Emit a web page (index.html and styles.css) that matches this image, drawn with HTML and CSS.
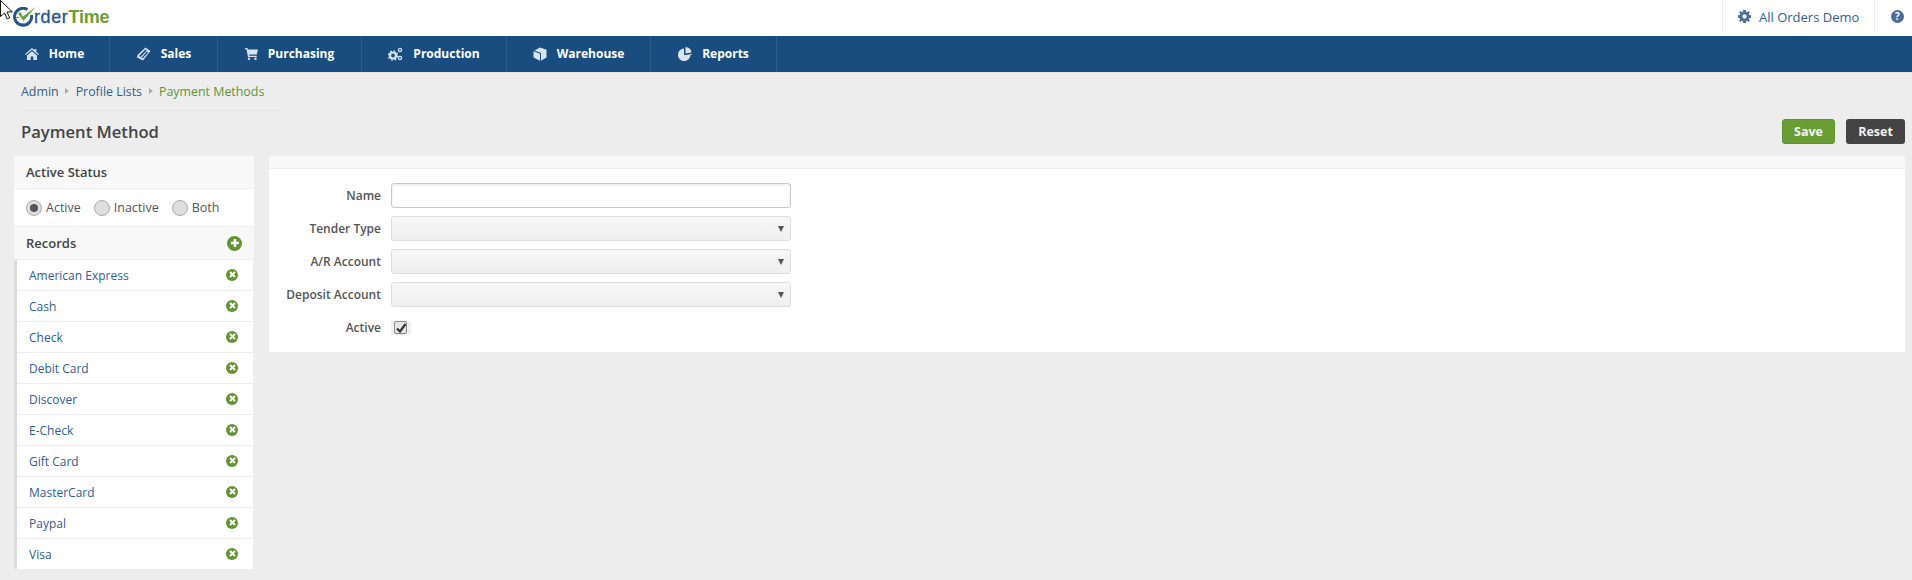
FILE: index.html
```html
<!DOCTYPE html>
<html lang="en">
<head>
<meta charset="utf-8">
<title>Payment Method</title>
<link rel="stylesheet" href="styles.css">
</head>
<body>
<svg class="cursor" width="13" height="20" viewBox="0 0 13 20"><path d="M.5.5v16l4-3.600 2.600 6 2.600-1.100-2.600-5.900h5.200z" fill="#fff" stroke="#111"/></svg>
<header class="topbar">
  <a class="logo">
    <svg class="logo-o" width="24" height="21" viewBox="0 0 24 21"><path d="M14.500 2.500A8.500 8.500 0 1 0 18.400 8" fill="none" stroke="#27558a" stroke-width="3"/><path d="M9.500 16v2M3.500 10.500h2" stroke="#27558a" stroke-width="1.200"/><path d="M5 6.500l2-1.500 3 4.500L22.500 0 10.500 14z" fill="#6a9f38"/></svg><span class="logo-a">rder</span><span class="logo-b">Time</span>
  </a>
  <div class="top-right">
    <div class="top-item company">
      <svg width="13" height="13" viewBox="0 0 12 12"><path fill="#4a6d9c" fill-rule="evenodd" d="M4.800 0h2.400l.3 1.600 1 .4L9.900 1l1.100 1.100-1 1.400.4 1 1.600.3v2.400l-1.600.3-.4 1 1 1.400-1.100 1.100-1.400-1-1 .4-.3 1.600H4.800l-.3-1.600-1-.4-1.400 1L1 9.900l1-1.400-.4-1L0 7.200V4.800l1.600-.3.4-1-1-1.400L2.100 1l1.400 1 1-.4zM6 4a2 2 0 1 0 0 4 2 2 0 0 0 0-4z"/></svg>
      <span>All Orders Demo</span>
    </div>
    <div class="top-item help"><span class="help-icon">?</span></div>
  </div>
</header>
<nav class="mainnav">
  <a class="nav-item w-home"><svg width="14" height="12" viewBox="0 0 14 12"><path fill="#d9e3ec" d="M7 0l2.500 2.200V1h1.800v2.800L14 6.300l-.8.8L7 1.700.8 7.100 0 6.300zM2 7.500L7 3.200l5 4.300V12H8.300V8.500H5.700V12H2z"/></svg><span>Home</span></a>
  <a class="nav-item w-sales"><svg width="15" height="14" viewBox="0 0 15 14"><path fill="#d9e3ec" d="M9.500.5l5 3.500-2.500 3L7 13.500 1 10.500l.5-2.500zM9.300 2.500L3 9l1.500 1L10.800 3.500zM11 4.500L5.500 10.800l1 .6 5.700-6z"/></svg><span>Sales</span></a>
  <a class="nav-item w-purch"><svg width="13" height="12" viewBox="0 0 13 12"><path fill="#d9e3ec" d="M0 0h2.500l.4 1.500H13l-1.300 5H4l.3 1.200h7.500V9H3L1.500 1.300H0z"/><circle cx="4" cy="10.700" r="1.200" fill="#d9e3ec"/><circle cx="10.500" cy="10.700" r="1.200" fill="#d9e3ec"/></svg><span>Purchasing</span></a>
  <a class="nav-item w-prod"><svg width="15" height="14" viewBox="0 0 15 14"><circle cx="5" cy="8.500" r="3" fill="none" stroke="#d9e3ec" stroke-width="2.200"/><circle cx="5" cy="8.500" r="4.600" fill="none" stroke="#d9e3ec" stroke-width="1.400" stroke-dasharray="1.800 1.800"/><circle cx="12" cy="3" r="1.600" fill="none" stroke="#d9e3ec" stroke-width="1.300"/><circle cx="12" cy="11" r="1.600" fill="none" stroke="#d9e3ec" stroke-width="1.300"/></svg><span>Production</span></a>
  <a class="nav-item w-ware"><svg width="14" height="14" viewBox="0 0 14 14"><path fill="#d9e3ec" d="M7 .5l6.500 2.300v7.700L8 13.800V6L1.500 3.500zM.5 4.300L7 6.700v7.100L.5 10.500z"/></svg><span>Warehouse</span></a>
  <a class="nav-item w-rep"><svg width="14" height="14" viewBox="0 0 14 14"><path fill="#d9e3ec" d="M6 1.500V8h6.500A6.300 6.300 0 1 1 6 1.500z"/><path fill="#d9e3ec" d="M7.500 0a6 6 0 0 1 6 5.500L7.500 6.500z"/><path fill="#d9e3ec" d="M8.500 7h5.300a6.300 6.300 0 0 1-.3 1z"/></svg><span>Reports</span></a>
</nav>
<main class="content">
  <div class="crumbs">
    <a>Admin</a><i class="caret"></i><a>Profile Lists</a><i class="caret"></i><span class="current">Payment Methods</span>
  </div>
  <div class="titlebar">
    <h1>Payment Method</h1>
    <div class="actions"><button class="btn save">Save</button><button class="btn reset">Reset</button></div>
  </div>
  <div class="columns">
    <aside class="sidebar">
      <div class="side-head">Active Status</div>
      <div class="radios">
        <label class="radio"><span class="radio-dot on"></span>Active</label>
        <label class="radio"><span class="radio-dot"></span>Inactive</label>
        <label class="radio"><span class="radio-dot"></span>Both</label>
      </div>
      <div class="side-head records">Records<span class="add"><svg width="10" height="10" viewBox="0 0 10 10"><path d="M5 1v8M1 5h8" stroke="#fff" stroke-width="2.600"/></svg></span></div>
      <ul class="list">
        <li><a>American Express</a><span class="del"><svg width="7" height="7" viewBox="0 0 7 7"><path d="M1 1l5 5M6 1L1 6" stroke="#fff" stroke-width="2"/></svg></span></li>
        <li><a>Cash</a><span class="del"><svg width="7" height="7" viewBox="0 0 7 7"><path d="M1 1l5 5M6 1L1 6" stroke="#fff" stroke-width="2"/></svg></span></li>
        <li><a>Check</a><span class="del"><svg width="7" height="7" viewBox="0 0 7 7"><path d="M1 1l5 5M6 1L1 6" stroke="#fff" stroke-width="2"/></svg></span></li>
        <li><a>Debit Card</a><span class="del"><svg width="7" height="7" viewBox="0 0 7 7"><path d="M1 1l5 5M6 1L1 6" stroke="#fff" stroke-width="2"/></svg></span></li>
        <li><a>Discover</a><span class="del"><svg width="7" height="7" viewBox="0 0 7 7"><path d="M1 1l5 5M6 1L1 6" stroke="#fff" stroke-width="2"/></svg></span></li>
        <li><a>E-Check</a><span class="del"><svg width="7" height="7" viewBox="0 0 7 7"><path d="M1 1l5 5M6 1L1 6" stroke="#fff" stroke-width="2"/></svg></span></li>
        <li><a>Gift Card</a><span class="del"><svg width="7" height="7" viewBox="0 0 7 7"><path d="M1 1l5 5M6 1L1 6" stroke="#fff" stroke-width="2"/></svg></span></li>
        <li><a>MasterCard</a><span class="del"><svg width="7" height="7" viewBox="0 0 7 7"><path d="M1 1l5 5M6 1L1 6" stroke="#fff" stroke-width="2"/></svg></span></li>
        <li><a>Paypal</a><span class="del"><svg width="7" height="7" viewBox="0 0 7 7"><path d="M1 1l5 5M6 1L1 6" stroke="#fff" stroke-width="2"/></svg></span></li>
        <li><a>Visa</a><span class="del"><svg width="7" height="7" viewBox="0 0 7 7"><path d="M1 1l5 5M6 1L1 6" stroke="#fff" stroke-width="2"/></svg></span></li>
      </ul>
    </aside>
    <section class="panel">
      <div class="panel-head"></div>
      <form class="form">
        <div class="row"><label>Name</label><div class="field input"></div></div>
        <div class="row"><label>Tender Type</label><div class="field select"><i></i></div></div>
        <div class="row"><label>A/R Account</label><div class="field select"><i></i></div></div>
        <div class="row"><label>Deposit Account</label><div class="field select"><i></i></div></div>
        <div class="row"><label>Active</label><div class="check-wrap"><span class="check"><svg width="10" height="10" viewBox="0 0 10 10"><path d="M1 5.500l3 3L9.500 1" fill="none" stroke="#333" stroke-width="2.200"/></svg></span></div></div>
      </form>
    </section>
  </div>
</main>
</body>
</html>
```
FILE: styles.css
```css
* { box-sizing: border-box; }
html, body { margin: 0; height: 100%; }
body {
  background: #ededed;
  font-family: "Open Sans", sans-serif;
  font-size: 12px;
  color: #444;
  overflow: hidden;
}
a { color: #2f5d94; }
.cursor { position: absolute; left: 0; top: 0; z-index: 5; }

.topbar { height: 36px; background: #fff; display: flex; justify-content: space-between; }
.logo { display: flex; align-items: center; padding: 0 0 2px 13px; font-family: "Liberation Sans", sans-serif; font-weight: 700; font-size: 18px; line-height: 34px; }
.logo-o { margin-right: -3px; flex: none; }
.logo-a { color: #27558a; font-weight: 400; letter-spacing: 0.600px; -webkit-text-stroke: 0.300px #27558a; }
.logo-b { color: #6a9f38; letter-spacing: -0.200px; }
.top-right { display: flex; height: 33px; }
.top-item { display: flex; align-items: center; border-left: 1px solid #e8e8e8; }
.company { width: 152px; padding-left: 15px; gap: 8px; color: #2f5d94; font-size: 13px; }
.help { width: 38px; padding-left: 16px; }
.help-icon { width: 13px; height: 13px; border-radius: 50%; background: #4a6d9c; color: #fff; font-size: 10px; font-weight: 700; line-height: 13px; text-align: center; }

.mainnav { height: 36px; background: #194d7f; display: flex; box-shadow: 0 1px 0 #e6e6e6; }
.nav-item { display: flex; align-items: center; justify-content: center; gap: 10px; border-right: 1px solid #2d5d8b; color: #fff; font-weight: 700; font-size: 12px; padding-bottom: 1px; }
.nav-item span { margin-bottom: 1px; }
.w-home { width: 110px; }
.w-sales { width: 108px; }
.w-purch { width: 144px; }
.w-prod { width: 145px; }
.w-ware { width: 144px; }
.w-rep { width: 126px; }

.content { padding: 0 7px 0 14px; }
.crumbs { width: 259px; margin-left: 7px; height: 39px; border-bottom: 1px solid #e4e4e4; display: flex; align-items: center; font-size: 12.400px; }
.crumbs a { color: #2f5d94; }
.caret { width: 0; height: 0; margin: 0 6.500px; border-left: 4px solid #aaa; border-top: 3.500px solid transparent; border-bottom: 3.500px solid transparent; }
.current { color: #5c9632; }
.titlebar { height: 45px; display: flex; justify-content: space-between; align-items: flex-start; }
.titlebar h1 { margin: 10px 0 0 7px; font-size: 16.600px; line-height: 22px; font-weight: 600; color: #444; }
.actions { display: flex; gap: 11px; margin-top: 8px; }
.btn { height: 25px; border: 0; border-radius: 3px; color: #f2f2f2; font: 700 12.500px/25px "Open Sans", sans-serif; padding: 0; }
.save { width: 53px; background: #6a9d33; border: 1px solid #5f9330; line-height: 23px; }
.reset { width: 59px; background: #444; }

.columns { display: flex; gap: 15px; align-items: flex-start; }
.sidebar { width: 240px; flex: none; }
.side-head { height: 33px; background: #f8f8f8; border-bottom: 1px solid #eee; padding: 0 12px; display: flex; align-items: center; justify-content: space-between; font-weight: 600; font-size: 13px; color: #444; }
.records { height: 33px; }
.add { width: 15px; height: 15px; border-radius: 50%; background: #5f9630; display: flex; align-items: center; justify-content: center; }
.radios { height: 38px; background: #fff; border-bottom: 1px solid #eee; padding: 0 12px; display: flex; align-items: center; gap: 13px; font-size: 12.500px; }
.radio { display: flex; align-items: center; gap: 4px; color: #555; }
.radio-dot { width: 16px; height: 16px; border-radius: 50%; background: #dedede; border: 1px solid #aaa; display: flex; align-items: center; justify-content: center; }
.radio-dot.on::after { content: ""; width: 8px; height: 8px; border-radius: 50%; background: #555; }
.list { list-style: none; margin: 0; padding: 0; width: 239px; border-left: 3px solid #ddd; }
.list li { height: 31px; background: #fff; border-bottom: 1px solid #eee; display: flex; align-items: center; justify-content: space-between; padding: 0 15px 1px 12px; }
.list li a { margin-top: 1px; }
.list li:last-child { border-bottom: 0; height: 30px; }
.del { width: 12px; height: 12px; border-radius: 50%; background: #5f9630; display: flex; align-items: center; justify-content: center; }

.panel { flex: 1; background: #fff; height: 196px; }
.panel-head { height: 13px; background: #f8f8f8; border-bottom: 1px solid #eee; }
.form { padding-top: 14px; display: flex; flex-direction: column; gap: 8px; }
.row { display: flex; align-items: center; height: 25px; }
.row label { width: 112px; text-align: right; margin-right: 10px; color: #555; font-weight: 600; font-size: 12px; padding-bottom: 1px; }
.field { width: 400px; height: 25px; border-radius: 3px; }
.input { background: #fff; border: 1px solid #c8c8c8; box-shadow: inset 0 1px 3px #e6e6e6; }
.select { background: linear-gradient(#f7f7f7, #efefef); border: 1px solid #dcdcdc; display: flex; align-items: center; justify-content: flex-end; padding-right: 6px; }
.select i { width: 0; height: 0; border-top: 6px solid #555; border-left: 3px solid transparent; border-right: 3px solid transparent; }
.check-wrap { background: #f0f0f0; width: 20px; height: 14px; padding-left: 3px; display: flex; align-items: center; }
.check { width: 13px; height: 13px; background: #e6e6e6; border: 1px solid #888; border-radius: 2px; display: flex; align-items: center; justify-content: center; }
```
